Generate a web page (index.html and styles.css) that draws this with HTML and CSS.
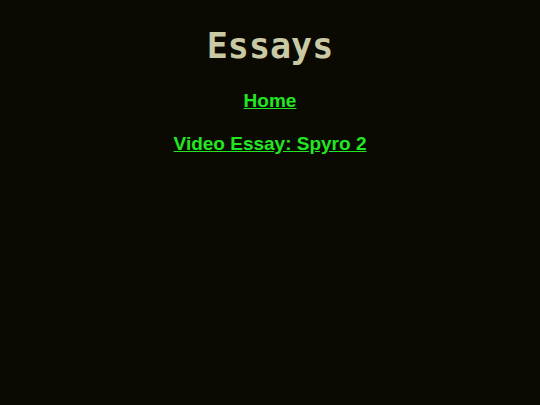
FILE: index.html
```html
<!DOCTYPE html>
<html>
<head>
<meta charset="utf-8">
<link rel="stylesheet" href="styles.css">
</head>
<body>
<h1 class="title">Essays</h1>
<h3 class="item"><a href="#">Home</a></h3>
<h3 class="item"><a href="#">Video Essay: Spyro 2</a></h3>
</body>
</html>
```
FILE: styles.css
```css
html, body {
  background: #0a0a03;
}
body {
  margin: 8px;
  font-family: "Liberation Sans", Arial, sans-serif;
  text-align: center;
}
.title {
  font-family: "DejaVu Sans Mono", monospace;
  font-weight: bold;
  font-size: 35px;
  color: #c9c9a4;
  margin: 18px 0 24px;
}
.item {
  font-size: 19px;
  margin: 20px 0;
}
.item + .item {
  margin-top: 21px;
}
.item a {
  color: #22e622;
}
```
